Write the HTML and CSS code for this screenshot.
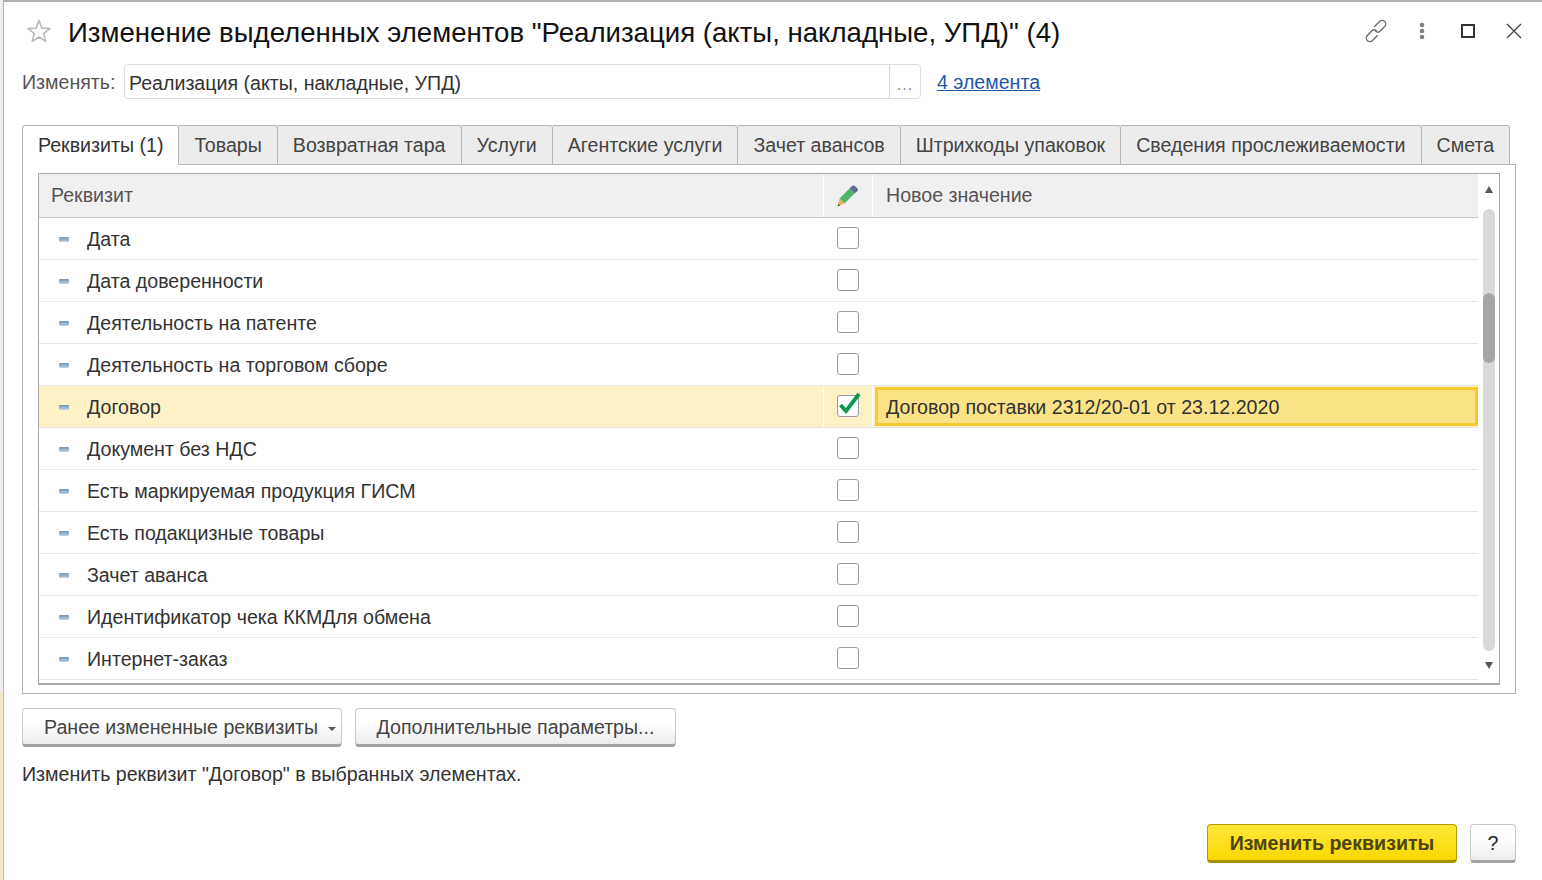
FILE: index.html
```html
<!DOCTYPE html>
<html lang="ru">
<head>
    <meta charset="UTF-8">
    <title>Изменение выделенных элементов</title>
    <link rel="stylesheet" href="styles.css">
</head>
<body>
<div class="window">
    <div class="title-bar">
        <svg class="star" width="26" height="26" viewBox="0 0 26 26"><path d="M13 2.5l2.9 7.6 8.1.4-6.3 5.1 2.1 7.8L13 19l-6.800 4.400 2.100-7.800L2 10.500l8.100-.4z" fill="none" stroke="#b9b9b9" stroke-width="1.600" stroke-linejoin="round"/></svg>
        <h1>Изменение выделенных элементов "Реализация (акты, накладные, УПД)" (4)</h1>
        <div class="title-icons">
            <span class="title-icon"><svg width="26" height="26" viewBox="0 0 26 26"><g fill="none" stroke="#6f6f6f" stroke-width="1.400" stroke-linecap="round"><path d="M11.500 8.500l4.800-4.800a3.600 3.600 0 0 1 5.600 4.600l-4.500 4.800a3.600 3.600 0 0 1-4.800.2"/><path d="M14.500 17.500l-4.800 4.800a3.600 3.600 0 0 1-5.600-4.600l4.500-4.800a3.600 3.600 0 0 1 4.800-.2"/></g></svg></span>
            <span class="title-icon"><svg width="6" height="18" viewBox="0 0 6 18"><circle cx="3" cy="3" r="2.300" fill="#808080"/><circle cx="3" cy="9" r="2.300" fill="#808080"/><circle cx="3" cy="15" r="2.300" fill="#808080"/></svg></span>
            <span class="title-icon"><span class="maximize"></span></span>
            <span class="title-icon"><svg width="16" height="16" viewBox="0 0 16 16"><path d="M1 1l14 14M15 1L1 15" stroke="#444" stroke-width="1.300" fill="none"/></svg></span>
        </div>
    </div>

    <div class="change-row">
        <label>Изменять:</label>
        <div class="field">
            <span class="field-value">Реализация (акты, накладные, УПД)</span>
            <span class="field-btn">...</span>
        </div>
        <a class="items-link" href="#">4 элемента</a>
    </div>

    <div class="tabs">
        <div class="tab active">Реквизиты (1)</div>
        <div class="tab">Товары</div>
        <div class="tab">Возвратная тара</div>
        <div class="tab">Услуги</div>
        <div class="tab">Агентские услуги</div>
        <div class="tab">Зачет авансов</div>
        <div class="tab">Штрихкоды упаковок</div>
        <div class="tab">Сведения прослеживаемости</div>
        <div class="tab">Смета</div>
    </div>

    <div class="tab-panel">
        <div class="grid">
            <div class="grid-body">
                <div class="row head">
                    <div class="col-name">Реквизит</div>
                    <div class="col-check">
                        <svg width="22" height="22" viewBox="0 0 22 22">
                            <path d="M2.500 13.500L12.500 3.500l5 5-10 10z" fill="#4fb56a"/>
                            <path d="M12.500 3.500L15 1q1.500-1 3 0l2.500 2.500q1 1.500 0 2.500l-3 2.500z" fill="#5a6f8c"/>
                            <path d="M2.500 13.500l5 5-7 3z" fill="#eeb14f"/>
                            <path d="M1.500 18.800l1.700 1.700-2.700 1z" fill="#555"/>
                        </svg>
                    </div>
                    <div class="col-value">Новое значение</div>
                </div>
                <div class="row"><div class="col-name"><i class="dash"></i>Дата</div><div class="col-check"><span class="box"></span></div><div class="col-value"></div></div>
                <div class="row"><div class="col-name"><i class="dash"></i>Дата доверенности</div><div class="col-check"><span class="box"></span></div><div class="col-value"></div></div>
                <div class="row"><div class="col-name"><i class="dash"></i>Деятельность на патенте</div><div class="col-check"><span class="box"></span></div><div class="col-value"></div></div>
                <div class="row"><div class="col-name"><i class="dash"></i>Деятельность на торговом сборе</div><div class="col-check"><span class="box"></span></div><div class="col-value"></div></div>
                <div class="row selected">
                    <div class="col-name"><i class="dash"></i>Договор</div>
                    <div class="col-check">
                        <span class="box">
                            <svg class="tick" width="26" height="24" viewBox="0 0 26 24"><path d="M3.500 15l5.500 6L22 4" fill="none" stroke="#0f9650" stroke-width="3.800"/></svg>
                        </span>
                    </div>
                    <div class="col-value"><span class="edit-cell">Договор поставки 2312/20-01 от 23.12.2020</span></div>
                </div>
                <div class="row"><div class="col-name"><i class="dash"></i>Документ без НДС</div><div class="col-check"><span class="box"></span></div><div class="col-value"></div></div>
                <div class="row"><div class="col-name"><i class="dash"></i>Есть маркируемая продукция ГИСМ</div><div class="col-check"><span class="box"></span></div><div class="col-value"></div></div>
                <div class="row"><div class="col-name"><i class="dash"></i>Есть подакцизные товары</div><div class="col-check"><span class="box"></span></div><div class="col-value"></div></div>
                <div class="row"><div class="col-name"><i class="dash"></i>Зачет аванса</div><div class="col-check"><span class="box"></span></div><div class="col-value"></div></div>
                <div class="row"><div class="col-name"><i class="dash"></i>Идентификатор чека ККМДля обмена</div><div class="col-check"><span class="box"></span></div><div class="col-value"></div></div>
                <div class="row"><div class="col-name"><i class="dash"></i>Интернет-заказ</div><div class="col-check"><span class="box"></span></div><div class="col-value"></div></div>
            </div>
            <div class="scrollbar">
                <span class="arrow up"></span>
                <div class="track"><div class="thumb"></div></div>
                <span class="arrow down"></span>
            </div>
        </div>
    </div>

    <div class="actions">
        <button class="btn btn-menu">Ранее измененные реквизиты <i class="caret"></i></button>
        <button class="btn btn-params">Дополнительные параметры...</button>
    </div>

    <p class="hint">Изменить реквизит "Договор" в выбранных элементах.</p>

    <div class="footer">
        <button class="btn btn-primary">Изменить реквизиты</button>
        <button class="btn btn-help">?</button>
    </div>
</div>
</body>
</html>
```

FILE: styles.css
```css
* {
    box-sizing: border-box;
}

html, body {
    height: 100%;
}

body {
    margin: 0;
    font-family: "Liberation Sans", Arial, sans-serif;
    font-size: 19.6px;
    color: #333;
    background: linear-gradient(#efefef 692px, #f4e8c8 692px);
    overflow: hidden;
}

.window {
    margin-left: 3px;
    height: 880px;
    background: #fff;
    border-left: 1px solid #b5b5b5;
    border-top: 2px solid #b0b0b0;
    padding: 0 26px 0 18px;
}

.title-bar {
    display: flex;
    align-items: center;
    height: 62px;
}

.star {
    margin: 0 16px 4px 4px;
}

h1 {
    margin: 0;
    font-size: 27.6px;
    font-weight: normal;
    color: #111;
    white-space: nowrap;
}

.title-icons {
    margin-left: auto;
    margin-right: -21px;
    margin-bottom: 4px;
    display: flex;
    align-items: center;
}

.title-icon {
    width: 46px;
    display: flex;
    justify-content: center;
}

.maximize {
    width: 14px;
    height: 14px;
    border: 2px solid #333;
}

.change-row {
    display: flex;
    align-items: center;
    height: 35px;
}

.change-row label {
    color: #555;
    width: 102px;
    padding-top: 2px;
}

.field {
    display: flex;
    width: 797px;
    height: 35px;
    border: 1px solid #ddd;
    border-radius: 4px;
}

.field-value {
    flex: 1;
    padding: 2px 0 0 4px;
    line-height: 33px;
}

.field-btn {
    width: 31px;
    border-left: 1px solid #d5d5d5;
    text-align: center;
    color: #888;
    font-size: 16px;
    letter-spacing: 1px;
    line-height: 39px;
}

.items-link {
    margin-left: 16px;
    padding-top: 2px;
    color: #1f55a8;
}

.tabs {
    display: flex;
    margin-top: 26px;
    height: 40px;
}

.tab {
    padding: 0 15px;
    line-height: 38px;
    background: #ececec;
    border: 1px solid #b5b5b5;
    border-left: 0;
    border-radius: 0 3px 0 0;
    color: #444;
    white-space: nowrap;
}

.tab.active {
    background: #fff;
    border-left: 1px solid #b5b5b5;
    border-bottom: 0;
    border-radius: 3px 3px 0 0;
    color: #333;
    position: relative;
    z-index: 1;
}

.tab-panel {
    width: 1494px;
    height: 530px;
    margin-top: -1px;
    padding: 8px 15px;
    border: 1px solid #b5b5b5;
}

.grid {
    display: flex;
    height: 512px;
    border: 1px solid #a8a8a8;
    border-bottom-width: 2px;
}

.grid-body {
    width: 1439px;
}

.row {
    display: flex;
    height: 42px;
    border-bottom: 1px solid #e6e6e6;
}

.row.head {
    height: 44px;
    background: #f0f0f0;
    border-bottom: 1px solid #c4c4c4;
    color: #555;
}

.row.selected {
    background: #fdf2c6;
}

.col-name {
    width: 784px;
    display: flex;
    align-items: center;
    padding: 2px 0 0 20px;
    white-space: nowrap;
}

.head .col-name {
    padding: 0 0 0 12px;
}

.col-check {
    width: 50px;
    display: flex;
    align-items: center;
    justify-content: center;
    border-left: 1px solid #fff;
    border-right: 1px solid #fff;
}

.row:not(.head):not(.selected) .col-check {
    border-color: transparent;
}

.col-value {
    flex: 1;
    display: flex;
    align-items: center;
    padding-left: 13px;
}

.selected .col-value {
    padding: 1px 0 1px 2px;
}

.edit-cell {
    flex: 1;
    height: 39px;
    line-height: 34px;
    padding-left: 8px;
    background: #fde387;
    border: 3px solid #f6c935;
}

.dash {
    width: 10px;
    height: 5px;
    margin-right: 18px;
    border-radius: 1px;
    background: linear-gradient(#6f93b0, #c4d3e0);
}

.box {
    position: relative;
    display: block;
    width: 22px;
    height: 22px;
    background: #fff;
    border: 1px solid #9c9c9c;
    border-radius: 3px;
    margin-top: -2px;
}

.tick {
    position: absolute;
    left: -1px;
    top: -6px;
}

.scrollbar {
    flex: 1;
    display: flex;
    flex-direction: column;
    align-items: center;
    padding: 12px 0 11px;
}

.arrow {
    width: 0;
    height: 0;
    border-left: 4px solid transparent;
    border-right: 4px solid transparent;
}

.arrow.up {
    border-bottom: 7px solid #555;
}

.arrow.down {
    border-top: 7px solid #555;
}

.track {
    width: 12px;
    height: 442px;
    margin: 16px 0 11px;
    background: #d9d9d9;
    border-radius: 6px;
}

.thumb {
    width: 12px;
    height: 70px;
    margin-top: 84px;
    background: #a6a6a6;
    border-radius: 6px;
}

.actions {
    display: flex;
    gap: 13px;
    margin-top: 14px;
}

.btn {
    font-family: inherit;
    font-size: 19.6px;
    color: #444;
    height: 39px;
    padding: 2px 0 0;
    background: linear-gradient(#fff 40%, #ececec);
    border: 1px solid #c8c8c8;
    border-bottom: 3px solid #a2a2a2;
    border-radius: 4px;
}

.btn-menu {
    width: 320px;
    padding-left: 21px;
    text-align: left;
}

.btn-params {
    width: 321px;
}

.caret {
    display: inline-block;
    width: 0;
    height: 0;
    margin-left: 4px;
    vertical-align: 3px;
    border-left: 4px solid transparent;
    border-right: 4px solid transparent;
    border-top: 4px solid #555;
}

.hint {
    margin: 15px 0 0;
    color: #333;
    line-height: 24px;
}

.footer {
    display: flex;
    justify-content: flex-end;
    gap: 13px;
    width: 1494px;
    margin-top: 38px;
}

.btn-primary {
    width: 250px;
    font-weight: bold;
    color: #4d4410;
    background: linear-gradient(#ffe83a, #f9d800);
    border: 1px solid #b39b00;
    border-bottom: 3px solid #a89000;
}

.btn-help {
    width: 46px;
    color: #222;
}
```
